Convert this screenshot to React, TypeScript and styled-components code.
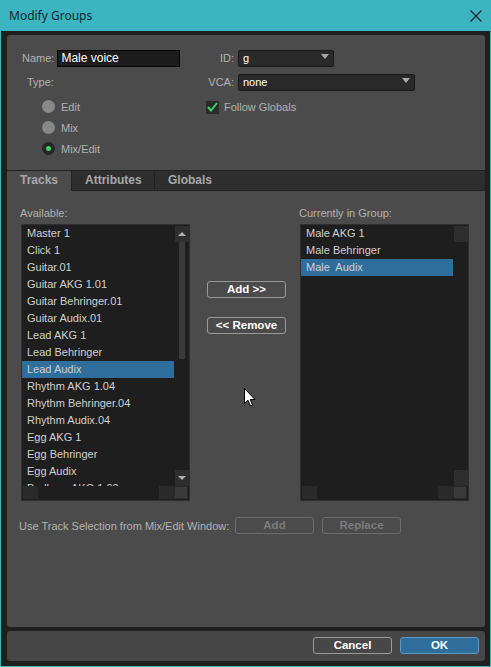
import React from 'react';
import styled, { createGlobalStyle } from 'styled-components';

const Global = createGlobalStyle`
    html, body { margin: 0; padding: 0; background: #1f1f1f; }
    body { font-family: "Liberation Sans", Arial, sans-serif; font-size: 11px; }
    * { box-sizing: border-box; }
`;

const Window = styled.div`
    position: relative;
    width: 491px;
    height: 667px;
    display: flex;
    flex-direction: column;
    border: 1px solid #3cb5c3;
    border-top: none;
    background: #1f1f1f;
    overflow: hidden;
`;

const TitleBar = styled.div`
    height: 31px;
    margin: 0 -1px;
    background: #3cb5c3;
    display: flex;
    align-items: center;
    justify-content: space-between;
    padding: 0 9px 0 9px;
    flex-shrink: 0;
`;

const Title = styled.span`
    font-family: "Noto Sans", "Open Sans", sans-serif;
    font-size: 12px;
    color: #10262a;
`;

const Frame = styled.div`
    flex: 1;
    display: flex;
    flex-direction: column;
    gap: 4px;
    padding: 4px 5px 5px 6px;
`;

const Panel = styled.div`
    flex: 1;
    background: #4b4b4b;
    border-radius: 3px;
    display: flex;
    flex-direction: column;
`;

const TopSection = styled.div`
    height: 135px;
    display: flex;
    padding-top: 15px;
`;

const LeftCol = styled.div`
    width: 195px;
    display: flex;
    flex-direction: column;
`;

const RightCol = styled.div`
    display: flex;
    flex-direction: column;
`;

const Row = styled.div<{ $mt?: number; $ml?: number }>`
    display: flex;
    align-items: center;
    height: 16px;
    margin-top: ${p => p.$mt ?? 0}px;
    margin-left: ${p => p.$ml ?? 0}px;
`;

const Label = styled.span<{ $w?: number; $mr?: number }>`
    color: #b2b2b2;
    font-size: 11px;
    ${p => p.$w ? `width: ${p.$w}px; text-align: right;` : ''}
    margin-right: ${p => p.$mr ?? 4}px;
`;

const NameInput = styled.div`
    width: 123px;
    height: 17px;
    background: #1c1c1c;
    border: 1px solid #050505;
    color: #fff;
    padding: 0 3px;
    line-height: 15px;
    font-size: 12px;
`;

const Dropdown = styled.div<{ $w: number }>`
    position: relative;
    width: ${p => p.$w}px;
    height: 17px;
    background: #2a2a2a;
    border: 1px solid #1a1a1a;
    border-radius: 2px;
    color: #fff;
    padding: 0 4px;
    line-height: 15px;
    font-size: 11px;
    &::after {
        content: '';
        position: absolute;
        right: 4px;
        top: 3px;
        border-left: 4px solid transparent;
        border-right: 4px solid transparent;
        border-top: 5px solid #a8a8a8;
    }
`;

const RadioList = styled.div`
    display: flex;
    flex-direction: column;
    margin-top: 6px;
    margin-left: 35px;
`;

const RadioRow = styled.div`
    display: flex;
    align-items: center;
    height: 21px;
    gap: 6px;
    color: #b2b2b2;
`;

const Radio = styled.span<{ $on?: boolean }>`
    width: 13px;
    height: 13px;
    border-radius: 50%;
    background: ${p => p.$on ? '#262626' : '#888'};
    display: flex;
    align-items: center;
    justify-content: center;
    &::after {
        content: '';
        width: 5px;
        height: 5px;
        border-radius: 50%;
        background: ${p => p.$on ? '#3fd16a' : 'transparent'};
    }
`;

const CheckBox = styled.span`
    width: 13px;
    height: 13px;
    background: #2a2a2a;
    display: flex;
    align-items: center;
    justify-content: center;
    margin-right: 5px;
`;

const TabBar = styled.div`
    height: 21px;
    display: flex;
    background: #2e2e2e;
    border-top: 1px solid #222;
    border-bottom: 1px solid #222;
`;

const Tab = styled.div<{ $active?: boolean; $w: number }>`
    width: ${p => p.$w}px;
    padding-left: 13px;
    line-height: 19px;
    font-weight: bold;
    font-size: 12px;
    color: #a8a8a8;
    background: ${p => p.$active ? '#4b4b4b' : 'transparent'};
    border-right: 1px solid #222;
    margin-bottom: ${p => p.$active ? '-1px' : '0'};
    &:last-child { border-right: none; }
`;

const Body = styled.div`
    padding: 15px 0 0 14px;
    display: flex;
    flex-direction: column;
`;

const Lists = styled.div`
    display: grid;
    grid-template-columns: 169px 110px 169px;
    grid-template-rows: 14px 277px;
    row-gap: 4px;
`;

const ListLabel = styled.span`
    color: #b2b2b2;
    font-size: 11px;
    line-height: 14px;
    margin-left: -1px;
`;

const ListBox = styled.div`
    background: #1e1e1e;
    border: 1px solid #2f2f2f;
    display: grid;
    grid-template-columns: 152px 1fr;
    grid-template-rows: 261px 1fr;
`;

const Items = styled.div`
    overflow: hidden;
    display: flex;
    flex-direction: column;
`;

const Item = styled.div<{ $sel?: boolean }>`
    height: 17px;
    flex-shrink: 0;
    line-height: 17px;
    padding-left: 5px;
    font-size: 11px;
    color: #d0d0d0;
    white-space: pre;
    background: ${p => p.$sel ? '#2f6d9b' : 'transparent'};
`;

const VScroll = styled.div`
    display: flex;
    flex-direction: column;
    align-items: center;
    padding-top: 1px;
`;

const ScrollBtn = styled.div<{ $dir?: 'up' | 'down' }>`
    width: 14px;
    height: 16px;
    background: #2e2e2e;
    display: flex;
    align-items: center;
    justify-content: center;
    flex-shrink: 0;
    &::after {
        content: '';
        border-left: 4px solid transparent;
        border-right: 4px solid transparent;
        ${p => p.$dir === 'up' ? 'border-bottom: 4px solid #b0b0b0;' : ''}
        ${p => p.$dir === 'down' ? 'border-top: 4px solid #b0b0b0;' : ''}
    }
`;

const Track = styled.div`
    flex: 1;
    width: 6px;
`;

const Thumb = styled.div<{ $h: number }>`
    width: 6px;
    height: ${p => p.$h}px;
    background: #393939;
`;

const HScroll = styled.div`
    display: flex;
    justify-content: space-between;
    padding: 0 0 0 1px;
`;

const HBox = styled.div`
    width: 15px;
    height: 13px;
    background: #2a2a2a;
`;

const Corner = styled.div`
    width: 14px;
    height: 13px;
    background: #3a3a3a;
    border: 1px solid #2a2a2a;
`;

const Middle = styled.div`
    display: flex;
    flex-direction: column;
    align-items: center;
    gap: 19px;
    padding-top: 57px;
    padding-left: 3px;
`;

const Button = styled.button<{ $primary?: boolean; $disabled?: boolean }>`
    width: 79px;
    height: 17px;
    padding: 0;
    border-radius: 3px;
    font-family: "Liberation Sans", Arial, sans-serif;
    font-size: 11.5px;
    font-weight: bold;
    line-height: 15px;
    background: ${p => p.$primary ? '#2f6d9b' : 'transparent'};
    border: 1px solid ${p => p.$primary ? '#5c98c4' : p.$disabled ? '#6c6c6c' : '#9a9a9a'};
    color: ${p => p.$disabled ? '#7b7b7b' : '#fff'};
`;

const SelectionRow = styled.div`
    display: flex;
    align-items: center;
    gap: 8px;
    margin-top: 16px;
    margin-left: -2px;
`;

const SelectionLabel = styled.span`
    width: 208px;
    color: #b2b2b2;
    font-size: 11px;
    white-space: nowrap;
`;

const Footer = styled.div`
    height: 30px;
    flex-shrink: 0;
    background: #474747;
    border-radius: 3px;
    display: flex;
    justify-content: flex-end;
    align-items: flex-start;
    gap: 8px;
    padding: 6px 6px 0 0;
`;

const Cursor = styled.svg`
    position: absolute;
    left: 243px;
    top: 388px;
`;

const available = [
    'Master 1', 'Click 1', 'Guitar.01', 'Guitar AKG 1.01', 'Guitar Behringer.01',
    'Guitar Audix.01', 'Lead AKG 1', 'Lead Behringer', 'Lead Audix', 'Rhythm AKG 1.04',
    'Rhythm Behringer.04', 'Rhythm Audix.04', 'Egg AKG 1', 'Egg Behringer', 'Egg Audix',
    'Bodhran AKG 1.03',
];

const inGroup = ['Male AKG 1', 'Male Behringer', 'Male  Audix'];

const List = ({ items, selected, arrows }: { items: string[]; selected: string; arrows?: boolean }) => (
    <ListBox>
        <Items>
            {items.map(i => <Item key={i} $sel={i === selected}>{i}</Item>)}
        </Items>
        <VScroll>
            <ScrollBtn $dir={arrows ? 'up' : undefined} />
            <Track>{arrows && <Thumb $h={117} />}</Track>
            <ScrollBtn $dir={arrows ? 'down' : undefined} />
        </VScroll>
        <HScroll>
            <HBox />
            <HBox />
        </HScroll>
        <Corner />
    </ListBox>
);

export default () => {
    return (
        <Window>
            <Global />
            <TitleBar>
                <Title>Modify Groups</Title>
                <svg width="12" height="12" viewBox="0 0 12 12">
                    <path d="M0.5 0.5 L11.5 11.5 M11.5 0.5 L0.5 11.5" stroke="#1a1a1a" strokeWidth="1.1" />
                </svg>
            </TitleBar>
            <Frame>
                <Panel>
                    <TopSection>
                        <LeftCol>
                            <Row $ml={15}>
                                <Label $mr={3}>Name:</Label>
                                <NameInput>Male voice</NameInput>
                            </Row>
                            <Row $mt={8} $ml={20}>
                                <Label>Type:</Label>
                            </Row>
                            <RadioList>
                                <RadioRow><Radio />Edit</RadioRow>
                                <RadioRow><Radio />Mix</RadioRow>
                                <RadioRow><Radio $on />Mix/Edit</RadioRow>
                            </RadioList>
                        </LeftCol>
                        <RightCol>
                            <Row>
                                <Label $w={32}>ID:</Label>
                                <Dropdown $w={96}>g</Dropdown>
                            </Row>
                            <Row $mt={8}>
                                <Label $w={32}>VCA:</Label>
                                <Dropdown $w={177}>none</Dropdown>
                            </Row>
                            <Row $mt={9} $ml={4}>
                                <CheckBox>
                                    <svg width="11" height="10" viewBox="0 0 11 10">
                                        <path d="M1 5 L4 8.5 L10 1" stroke="#3fd16a" strokeWidth="2" fill="none" />
                                    </svg>
                                </CheckBox>
                                <Label>Follow Globals</Label>
                            </Row>
                        </RightCol>
                    </TopSection>
                    <TabBar>
                        <Tab $active $w={65}>Tracks</Tab>
                        <Tab $w={83}>Attributes</Tab>
                        <Tab $w={120}>Globals</Tab>
                    </TabBar>
                    <Body>
                        <Lists>
                            <ListLabel>Available:</ListLabel>
                            <span />
                            <ListLabel>Currently in Group:</ListLabel>
                            <List items={available} selected="Lead Audix" arrows />
                            <Middle>
                                <Button>Add &gt;&gt;</Button>
                                <Button>&lt;&lt; Remove</Button>
                            </Middle>
                            <List items={inGroup} selected="Male  Audix" />
                        </Lists>
                        <SelectionRow>
                            <SelectionLabel>Use Track Selection from Mix/Edit Window:</SelectionLabel>
                            <Button $disabled>Add</Button>
                            <Button $disabled>Replace</Button>
                        </SelectionRow>
                    </Body>
                </Panel>
                <Footer>
                    <Button>Cancel</Button>
                    <Button $primary>OK</Button>
                </Footer>
            </Frame>
            <Cursor width="12" height="19" viewBox="0 0 12 19">
                <path d="M0.5 0.5 L0.5 15.5 L4 12.2 L6.5 18 L8.6 17.1 L6.2 11.5 L11 11.5 Z" fill="#fff" stroke="#000" strokeWidth="1" />
            </Cursor>
        </Window>
    );
}
